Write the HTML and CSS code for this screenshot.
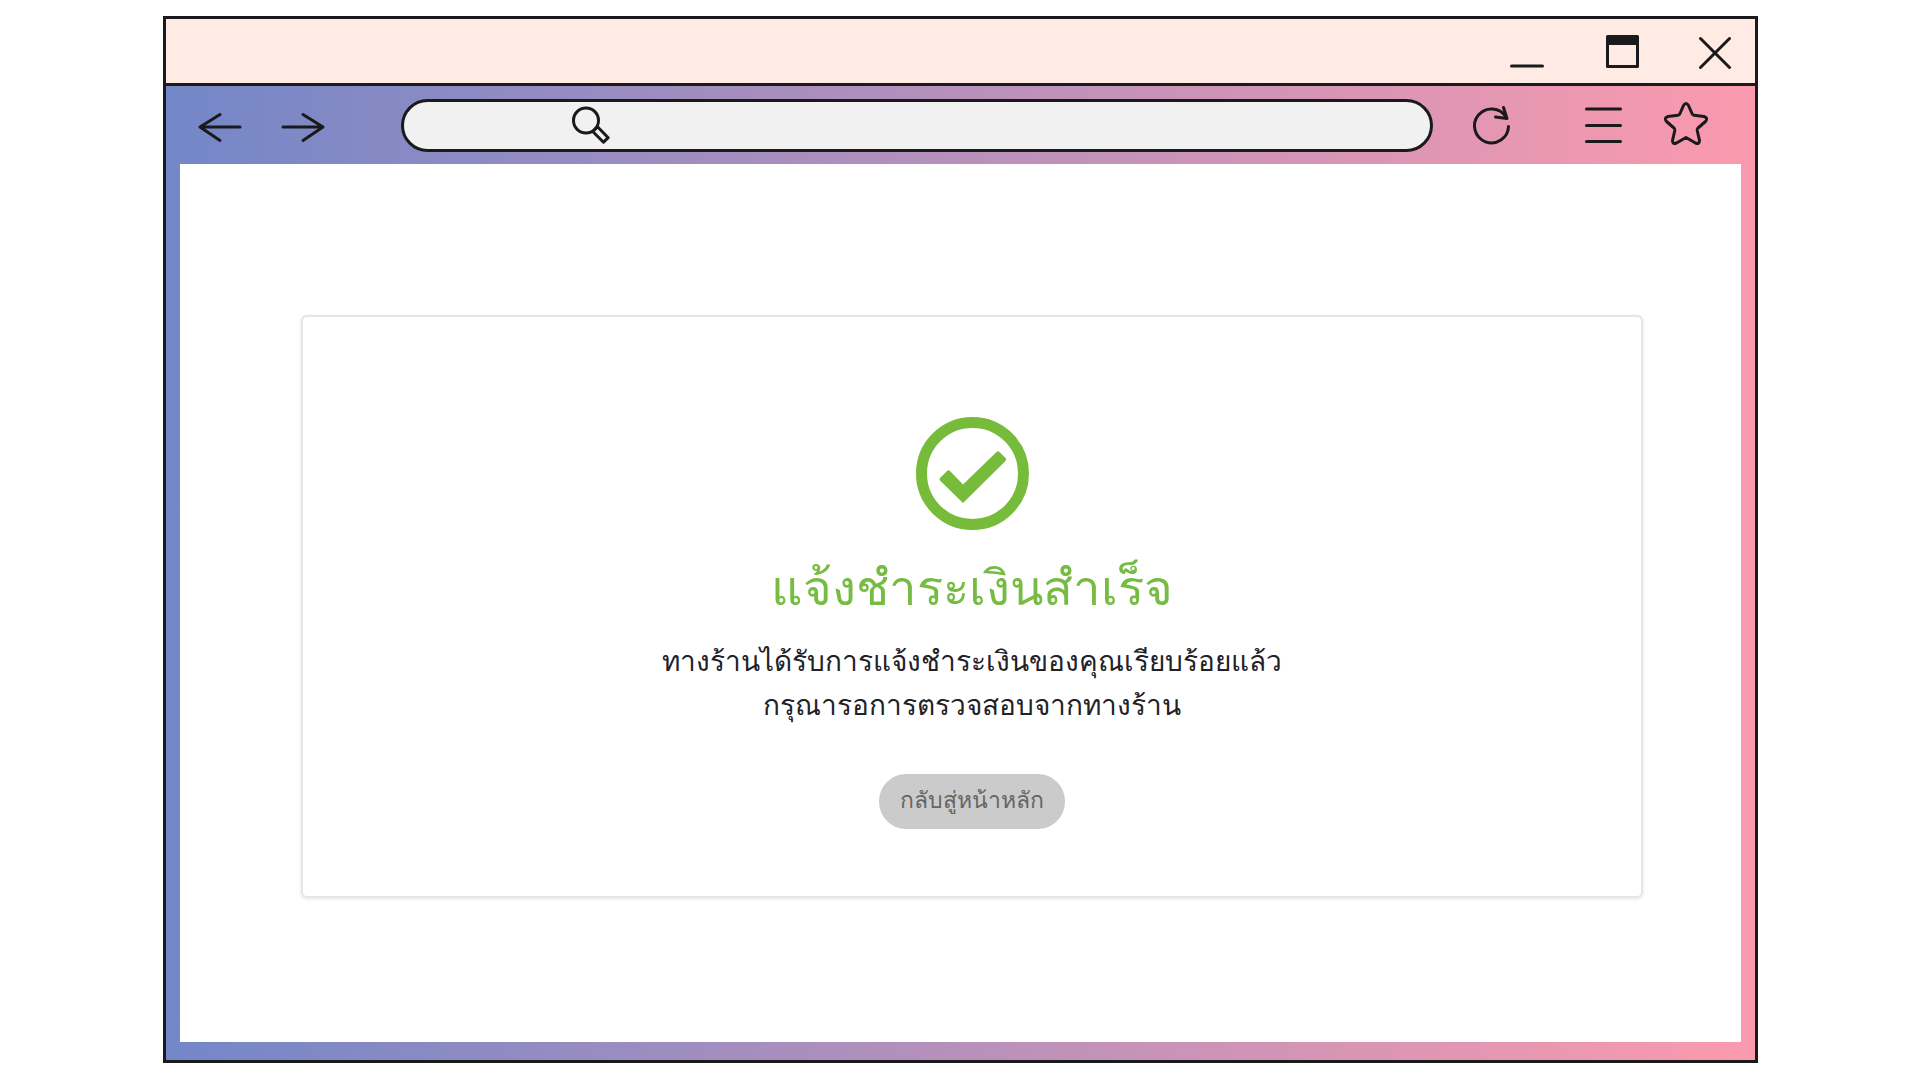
FILE: index.html
```html
<!DOCTYPE html>
<html lang="th">
<head>
<meta charset="utf-8">
<meta name="viewport" content="width=device-width, initial-scale=1">
<title>แจ้งชำระเงินสำเร็จ</title>
<link rel="stylesheet" href="styles.css">
</head>
<body>
<div class="window">
  <header class="titlebar">
    <button class="icon-button" type="button" aria-label="Minimize">
      <svg class="icon" width="36" height="36" viewBox="0 0 36 36"><path d="M2.5 33h31"/></svg>
    </button>
    <button class="icon-button" type="button" aria-label="Maximize">
      <svg class="icon" width="36" height="36" viewBox="0 0 36 36"><path d="M4.500 3.500h30v30h-30z"/><path class="solid" d="M4 3h31v9H4z"/></svg>
    </button>
    <button class="icon-button" type="button" aria-label="Close">
      <svg class="icon" width="36" height="36" viewBox="0 0 36 36"><path d="M3.500 5.500l29 29M32.500 5.500l-29 29"/></svg>
    </button>
  </header>

  <nav class="toolbar">
    <div class="history">
      <button class="icon-button" type="button" aria-label="Back">
        <svg class="icon" width="48" height="48" viewBox="0 0 48 48"><path d="M44 26H4M24 13.500L4 26l20 13.500"/></svg>
      </button>
      <button class="icon-button" type="button" aria-label="Forward">
        <svg class="icon" width="48" height="48" viewBox="0 0 48 48"><path d="M4 26h40M24 13.500L44 26 24 39.500"/></svg>
      </button>
    </div>
    <form class="address">
      <svg class="icon" width="40" height="40" viewBox="0 0 40 40"><circle cx="15" cy="15.500" r="12.500"/><path d="M21.700 26.500L32.500 37.200 37.200 32.700 26.500 21.700z"/></svg>
      <input class="address-input" type="text" aria-label="Address">
    </form>
    <button class="icon-button reload" type="button" aria-label="Reload">
      <svg class="icon" width="44" height="44" viewBox="0 0 44 44"><path d="M38.500 23.500A17 17 0 1 1 36 14M33.500 4.500l3.500 11-11.500-1.500"/></svg>
    </button>
    <button class="icon-button menu" type="button" aria-label="Menu">
      <svg class="icon" width="44" height="44" viewBox="0 0 44 44"><path d="M4.500 6h34M4.500 22.500h34M4.500 38.500h34"/></svg>
    </button>
    <button class="icon-button favorite" type="button" aria-label="Favorite">
      <svg class="icon" width="48" height="48" viewBox="0 0 48 48"><path d="M21.500 4.500Q24 .5 26.500 4.500L30 12.500Q30.500 14 32 14.200L42 15.500Q46.500 17 43.500 20.500L36 27Q35 28 35.200 29.500L37.500 39.500Q37.500 43.500 33.500 42L24 36.500 14.500 42Q10.500 43.500 10.500 39.500L12.800 29.500Q13 28 12 27L4.500 20.500Q1.500 17 6 15.500L16 14.200Q17.500 14 18 12.500Z"/></svg>
    </button>
  </nav>

  <main class="page">
    <section class="card">
      <svg class="check" width="113" height="113" viewBox="0 0 113 113" aria-hidden="true"><circle cx="56.500" cy="56.500" r="51"/><path d="M24 61l7-7q1.500-1.500 3 0L47 67.500 80.500 35q1.500-1.500 3 0l6 6q1.500 1.500 0 3L47 86 24 63.500q-1-1.500 0-2.500z"/></svg>
      <h1 class="heading">แจ้งชำระเงินสำเร็จ</h1>
      <p class="message">ทางร้านได้รับการแจ้งชำระเงินของคุณเรียบร้อยแล้ว<br>กรุณารอการตรวจสอบจากทางร้าน</p>
      <button class="home-button" type="button">กลับสู่หน้าหลัก</button>
    </section>
  </main>
</div>
</body>
</html>
```

FILE: styles.css
```css
* {
  box-sizing: border-box;
}

body {
  display: flex;
  min-height: 100vh;
  margin: 0;
  padding: 16px 162px 17px 163px;
  background: #fff;
  font-family: "Liberation Sans", sans-serif;
}

.window {
  display: flex;
  flex: 1;
  flex-direction: column;
  border: 3px solid #1a1a1c;
  background: linear-gradient(90deg, #7387c8, #fb9aae);
}

.titlebar {
  display: flex;
  align-items: center;
  justify-content: flex-end;
  gap: 58px;
  height: 67px;
  padding: 0 22px 0 0;
  border-bottom: 3px solid #1a1a1c;
  background: #ffebe4;
}

.icon-button {
  display: block;
  padding: 0;
  border: 0;
  background: none;
  cursor: pointer;
}

.icon {
  display: block;
  flex: none;
  fill: none;
  stroke: #1a1a1c;
  stroke-width: 3;
  stroke-linecap: round;
  stroke-linejoin: round;
}

.icon .solid {
  fill: #1a1a1c;
  stroke: none;
}

.toolbar {
  display: flex;
  align-items: center;
  height: 78px;
  padding: 0 45px 0 30px;
}

.history {
  display: flex;
  gap: 35px;
}

.address {
  display: flex;
  flex: 1;
  align-items: center;
  height: 53px;
  margin: 0 37px 0 74px;
  padding: 0 24px 0 167px;
  border: 3px solid #1a1a1c;
  border-radius: 27px;
  background: #f1f1f1;
}

.address-input {
  flex: 1;
  min-width: 0;
  height: 40px;
  padding: 0 12px;
  border: 0;
  outline: 0;
  background: transparent;
  font: inherit;
  font-size: 20px;
}

.menu {
  margin: 0 36px 0 68px;
}

.page {
  display: flex;
  flex: 1;
  margin: 0 14px 18px;
  padding: 151px 98px 144px 121px;
  background: #fff;
}

.card {
  display: flex;
  flex: 1;
  flex-direction: column;
  align-items: center;
  padding: 100px 24px 66px;
  border: 2px solid #e6e6e6;
  border-radius: 6px;
  box-shadow: 0 1px 2px 1px #f0f0f0;
  text-align: center;
}

.check circle {
  fill: none;
  stroke: #76bc3a;
  stroke-width: 11;
}

.check path {
  fill: #76bc3a;
}

.heading {
  margin: 20px 0 14px;
  color: #76bc43;
  font-size: 49px;
  font-weight: 400;
  line-height: 76px;
}

.message {
  margin: 0;
  color: #222228;
  font-size: 28px;
  line-height: 44px;
}

.home-button {
  height: 55px;
  margin: 46px 0 0;
  padding: 0 21px 3px;
  border: 0;
  border-radius: 27px;
  background: #cbcbcb;
  color: #666;
  font: inherit;
  font-size: 23px;
  line-height: 32px;
  cursor: pointer;
}
```
